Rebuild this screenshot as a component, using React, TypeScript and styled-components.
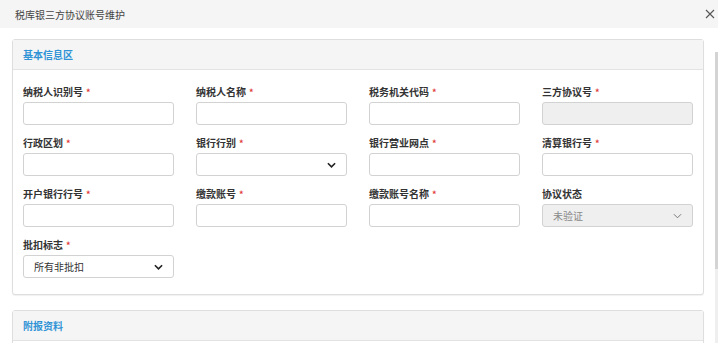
import React from 'react';
import styled, {createGlobalStyle} from "styled-components";

const GlobalStyle = createGlobalStyle`
    html, body {
        margin: 0;
        padding: 0;
        background: #fff;
    }

    body {
        font-family: "Noto Sans CJK SC", "Noto Sans", sans-serif;
        font-size: 10px;
        color: #333;
    }
`

type Field = {
    label: string
    required?: boolean
    kind: "text" | "select"
    value?: string
    disabled?: boolean
}

const fields: Field[] = [
    {label: "纳税人识别号", required: true, kind: "text"},
    {label: "纳税人名称", required: true, kind: "text"},
    {label: "税务机关代码", required: true, kind: "text"},
    {label: "三方协议号", required: true, kind: "text", disabled: true},
    {label: "行政区划", required: true, kind: "text"},
    {label: "银行行别", required: true, kind: "select"},
    {label: "银行营业网点", required: true, kind: "text"},
    {label: "清算银行号", required: true, kind: "text"},
    {label: "开户银行行号", required: true, kind: "text"},
    {label: "缴款账号", required: true, kind: "text"},
    {label: "缴款账号名称", required: true, kind: "text"},
    {label: "协议状态", kind: "select", value: "未验证", disabled: true},
    {label: "批扣标志", required: true, kind: "select", value: "所有非批扣"},
]

function Chevron({disabled}: { disabled?: boolean }) {
    return (
        <ChevronIcon viewBox="0 0 10 6" $disabled={disabled}>
            <path d="M1 1 L5 5 L9 1" fill="none"/>
        </ChevronIcon>
    )
}

function App() {
    return (
        <Modal>
            <GlobalStyle/>
            <Header>
                <Title>税库银三方协议账号维护</Title>
                <Close aria-label="close">
                    <svg viewBox="0 0 10 10" width="10" height="10">
                        <path d="M1 1 L9 9 M9 1 L1 9" stroke="#555" strokeWidth="1.1"/>
                    </svg>
                </Close>
            </Header>
            <Main>
                <Body>
                    <Panel>
                        <PanelHeader>基本信息区</PanelHeader>
                        <FormGrid>
                            {fields.map((f) => (
                                <FieldBox key={f.label}>
                                    <Label>
                                        {f.label}
                                        {f.required && <Star>*</Star>}
                                    </Label>
                                    {f.kind === "text" ? (
                                        <Input $disabled={f.disabled}/>
                                    ) : (
                                        <Select $disabled={f.disabled}>
                                            <SelectText $disabled={f.disabled}>{f.value}</SelectText>
                                            <Chevron disabled={f.disabled}/>
                                        </Select>
                                    )}
                                </FieldBox>
                            ))}
                        </FormGrid>
                    </Panel>
                    <Panel>
                        <PanelHeader>附报资料</PanelHeader>
                        <PanelBody/>
                    </Panel>
                </Body>
                <ScrollTrack>
                    <ScrollThumb/>
                </ScrollTrack>
            </Main>
        </Modal>
    );
}

const Modal = styled.div`
    width: 718px;
    height: 343px;
    display: flex;
    flex-direction: column;
    background: #fff;
    overflow: hidden;
`

const Header = styled.div`
    height: 28px;
    flex: none;
    display: flex;
    align-items: center;
    justify-content: space-between;
    padding: 0 2px 0 15px;
    background: #f5f5f5;
`

const Title = styled.div`
    font-size: 10px;
    color: #444;
`

const Close = styled.div`
    width: 12px;
    height: 12px;
    display: flex;
    align-items: center;
    justify-content: center;
`

const Main = styled.div`
    flex: 1;
    min-height: 0;
    display: flex;
`

const Body = styled.div`
    flex: 1;
    overflow: hidden;
    padding: 11px 11px 0 12px;
`

const ScrollTrack = styled.div`
    width: 3px;
    flex: none;
    margin-top: 24px;
    background: #efefef;
`

const ScrollThumb = styled.div`
    height: 217px;
    background: #d4d4d4;
`

const Panel = styled.div`
    border: 1px solid #dedede;
    border-radius: 3px;
    box-shadow: 0 1px 1px rgba(0, 0, 0, 0.06);
    margin-bottom: 15px;
    background: #fff;
`

const PanelHeader = styled.div`
    height: 29px;
    display: flex;
    align-items: center;
    padding: 0 10px;
    background: #f5f5f5;
    border-bottom: 1px solid #e3e3e3;
    color: #2f93d6;
    font-weight: 600;
    font-size: 10px;
`

const PanelBody = styled.div`
    height: 80px;
`

const FormGrid = styled.div`
    display: grid;
    grid-template-columns: repeat(4, 151px);
    column-gap: 22px;
    row-gap: 11px;
    padding: 15px 10px 16px;
`

const FieldBox = styled.div`
    display: flex;
    flex-direction: column;
    gap: 3px;
`

const Label = styled.div`
    height: 14px;
    line-height: 14px;
    font-weight: 700;
    color: #333;
    white-space: nowrap;
`

const Star = styled.span`
    color: #e23c3c;
    margin-left: 3px;
    font-size: 9px;
`

const Input = styled.div<{ $disabled?: boolean }>`
    box-sizing: border-box;
    height: 23px;
    border: 1px solid #d2d2d2;
    border-radius: 3px;
    background: ${p => p.$disabled ? "#efefef" : "#fff"};
`

const Select = styled(Input)`
    display: flex;
    align-items: center;
    justify-content: space-between;
    padding: 0 10px 0 10px;
`

const SelectText = styled.span<{ $disabled?: boolean }>`
    color: ${p => p.$disabled ? "#8a8a8a" : "#333"};
    font-size: 10px;
`

const ChevronIcon = styled.svg<{ $disabled?: boolean }>`
    width: 9px;
    height: 6px;

    path {
        stroke: ${p => p.$disabled ? "#777" : "#222"};
        stroke-width: ${p => p.$disabled ? 1.1 : 1.8};
    }
`

export default App;
